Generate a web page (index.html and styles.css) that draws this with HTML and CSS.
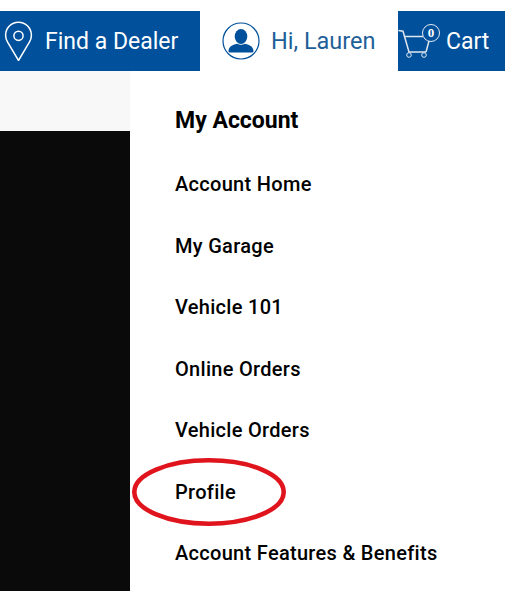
FILE: index.html
```html
<!DOCTYPE html>
<html lang="en">
<head>
<meta charset="utf-8">
<title>My Account</title>
<link rel="stylesheet" href="styles.css">
</head>
<body>
<header class="topbar">
  <a class="tab tab-dealer">
    <svg class="icon-pin" viewBox="0 0 30 40" width="30" height="40" aria-hidden="true">
      <path d="M14.500 1.200C7.300 1.200 1.600 7 1.600 14.200c0 2.600.8 4.900 2 7L14.500 39.500l10.900-18.300c1.200-2.100 2-4.400 2-7C27.400 7 21.700 1.200 14.500 1.200z" fill="none" stroke="#fff" stroke-width="1.500"/>
      <circle cx="14.500" cy="14.800" r="4.600" fill="none" stroke="#fff" stroke-width="1.500"/>
    </svg>
    <span>Find a Dealer</span>
  </a>
  <a class="tab tab-user">
    <svg class="icon-user" viewBox="0 0 38 38" width="38" height="38" aria-hidden="true">
      <circle cx="19" cy="19" r="18" fill="#fff" stroke="#00509b" stroke-width="1.200"/>
      <ellipse cx="19" cy="14.500" rx="6.300" ry="7.500" fill="#00509b"/>
      <path d="M6.500 29.500c0-5 3.500-6.600 8.500-7.800 2.500 1.500 5.500 1.500 8 0 5 1.200 8.500 2.800 8.500 7.800 0 .8-1 1-2 1H8.500c-1 0-2-.2-2-1z" fill="#00509b"/>
    </svg>
    <span>Hi, Lauren</span>
  </a>
  <a class="tab tab-cart">
    <span class="cart-icon">
      <svg viewBox="0 0 34 30" width="34" height="30" aria-hidden="true">
        <path d="M.5 1.500 5 2.200l6 20.800h17" fill="none" stroke="#dfe6ef" stroke-width="1.500"/>
        <path d="M6.500 7.500H25M31 12l-3 11" fill="none" stroke="#dfe6ef" stroke-width="1.500"/>
        <circle cx="11" cy="26" r="2.300" fill="none" stroke="#dfe6ef" stroke-width="1"/>
        <circle cx="26" cy="26" r="2.300" fill="none" stroke="#dfe6ef" stroke-width="1"/>
      </svg>
      <span class="badge">0</span>
    </span>
    <span>Cart</span>
  </a>
</header>
<main class="page">
  <aside class="backdrop">
    <div class="strip"></div>
    <div class="hero"></div>
  </aside>
  <nav class="menu">
    <h2 class="menu-title">My Account</h2>
    <a class="menu-link">Account Home</a>
    <a class="menu-link">My Garage</a>
    <a class="menu-link">Vehicle 101</a>
    <a class="menu-link">Online Orders</a>
    <a class="menu-link">Vehicle Orders</a>
    <a class="menu-link menu-link-marked">Profile
      <svg class="ring" viewBox="0 0 154 68" width="154" height="68" aria-hidden="true">
        <ellipse cx="77" cy="34" rx="74.700" ry="31.700" fill="none" stroke="#e0141c" stroke-width="4.600"/>
      </svg>
    </a>
    <a class="menu-link">Account Features &amp; Benefits</a>
  </nav>
</main>
</body>
</html>
```
FILE: styles.css
```css
* { box-sizing: border-box; }
html, body { margin: 0; height: 591px; overflow: hidden; background: #fff; }
body { padding-top: 11px; font-family: Roboto, "Liberation Sans", sans-serif; }

.topbar {
  display: flex;
  height: 60px;
}

.tab {
  display: flex;
  align-items: center;
  font-size: 23px;
  font-weight: 400;
  height: 60px;
}
.tab-dealer {
  width: 200px;
  padding-left: 4px;
  gap: 11px;
  background: #00509b;
  color: #fff;
}
.tab-dealer .icon-pin { flex: none; width: 30px; height: 40px; }
.tab-user {
  width: 198px;
  padding-left: 22px;
  gap: 11px;
  color: #1f5f99;
  font-size: 23.500px;
}
.tab-cart {
  flex: 1;
  gap: 6px;
  background: #00509b;
  color: #fff;
}
.cart-icon {
  position: relative;
  display: block;
  width: 42px;
  height: 36px;
  margin-top: 1px;
}
.cart-icon svg { position: absolute; left: 0; top: 5px; }
.badge {
  position: absolute;
  left: 24px;
  top: 0;
  width: 18px;
  height: 18px;
  border: 1px solid #e6ecf3;
  border-radius: 50%;
  background: #00509b;
  color: #fff;
  font: 700 13px/16px "Liberation Serif", serif;
  text-align: center;
}

.page {
  display: flex;
  height: 520px;
  overflow: hidden;
}
.backdrop { width: 130px; flex: none; display: flex; flex-direction: column; }
.strip { height: 60px; background: #f8f8f8; }
.hero { flex: 1; background: #0a0a0a; }

.menu {
  flex: 1;
  padding: 35px 0 0 45px;
  color: #000;
  display: flex;
  flex-direction: column;
  align-items: flex-start;
}
.menu-title {
  flex: none;
  margin: 1px 0 37px;
  font-size: 23px;
  line-height: 28px;
  font-weight: 700;
}
.menu-link {
  position: relative;
  flex: none;
  font-size: 20px;
  line-height: 24px;
  height: 61.500px;
  font-weight: 500;
  letter-spacing: .3px;
}
.ring {
  position: absolute;
  left: -43px;
  top: -22px;
}
```
